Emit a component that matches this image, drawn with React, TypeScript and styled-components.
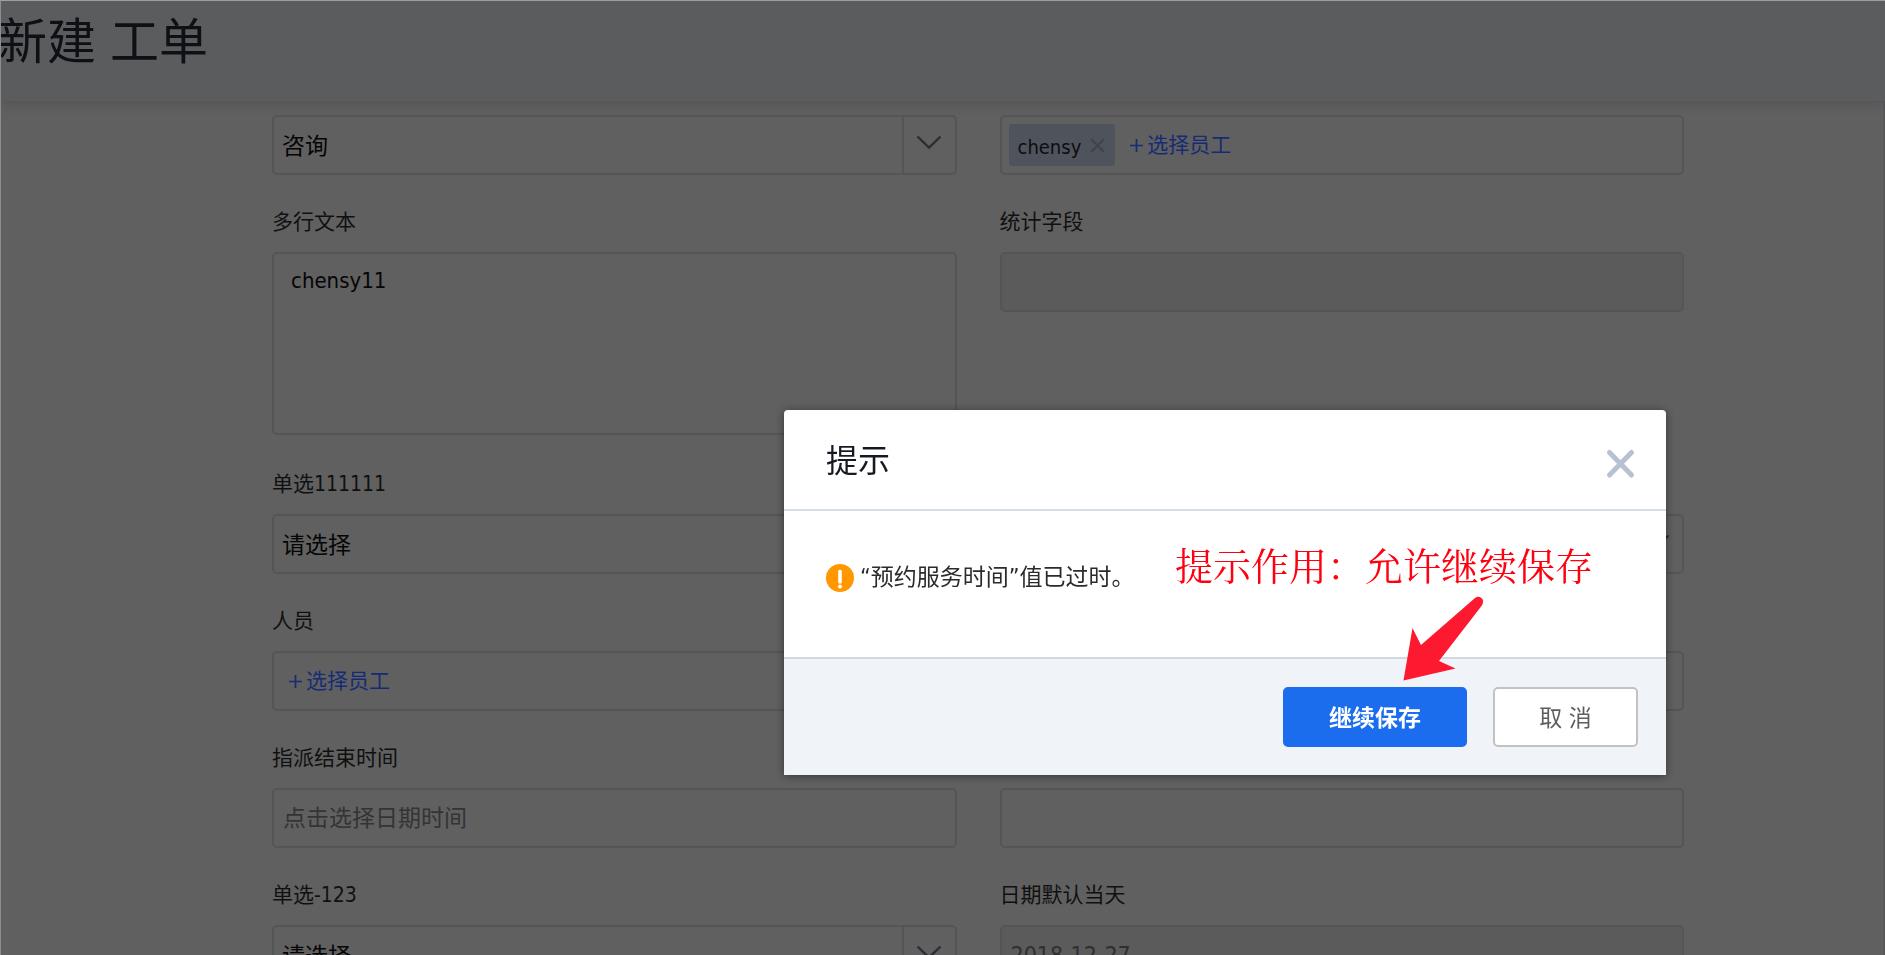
import React from 'react';
import styled, { createGlobalStyle } from 'styled-components';

const Global = createGlobalStyle`
  * { box-sizing: border-box; }
  body {
    margin: 0;
    background: #606060;
    font-family: "DejaVu Sans Condensed", "Noto Sans CJK SC", sans-serif;
  }
  input, select, textarea, button { font-family: inherit; margin: 0; }
`;

const Page = styled.div`
  height: 100vh;
  overflow: hidden;
  border-top: 1px solid #9d9fa0;
  border-left: 1px solid #8c8d8e;
`;

const Header = styled.header`
  position: relative;
  height: 100px;
  background: #5b5c5e;
  box-shadow: 0 2px 12px rgba(0, 0, 0, 0.16);
`;

const PageTitle = styled.h1`
  margin: 0 0 0 -3px;
  padding-top: 6px;
  font-size: 49px;
  line-height: 72px;
  font-weight: 400;
  color: #0d1015;
`;

const Form = styled.form`
  display: grid;
  grid-template-columns: 1fr 1fr;
  column-gap: 43px;
  row-gap: 32px;
  padding: 14px 199px 0 271px;
  border-right: 2px solid #56585a;
`;

const Field = styled.div`
  display: flex;
  flex-direction: column;
`;

const Label = styled.label`
  height: 30px;
  margin-bottom: 15px;
  font-size: 21px;
  line-height: 30px;
  color: #101010;
`;

const Box = styled.div<{ $muted?: boolean }>`
  display: flex;
  align-items: center;
  height: 60px;
  border: 2px solid #555;
  border-radius: 5px;
  background: ${(p) => (p.$muted ? '#5b5b5b' : '#606060')};
`;

const TextInput = styled.input`
  flex: 1;
  min-width: 0;
  height: 100%;
  padding: 0 9px;
  border: 0;
  outline: 0;
  background: transparent;
  font-size: 23px;
  color: #2f2f2f;
  &::placeholder { color: #343434; opacity: 1; }
`;

const TextArea = styled.textarea`
  display: block;
  height: 183px;
  margin-bottom: 2px;
  padding: 11px 17px;
  border: 2px solid #555;
  border-radius: 5px;
  outline: 0;
  resize: none;
  background: #606060;
  font-size: 22px;
  line-height: 32px;
  color: #050505;
`;

const Select = styled.select`
  flex: 1;
  height: 100%;
  padding: 2px 8px 0;
  border: 0;
  outline: 0;
  appearance: none;
  background: transparent;
  font-size: 23px;
  color: #050505;
  opacity: 1;
`;

const Caret = styled.span`
  display: flex;
  align-items: center;
  justify-content: center;
  width: 53px;
  height: 100%;
  padding-bottom: 4px;
  border-left: 2px solid #555;
`;

const Tag = styled.span`
  display: flex;
  align-items: center;
  gap: 9px;
  height: 42px;
  margin-left: 7px;
  padding: 4px 10px 0 9px;
  border-radius: 3px;
  background: #4f535b;
  font-size: 20px;
  color: #0c0e12;
`;

const TagRemove = styled.button`
  display: flex;
  padding: 0 0 4px;
  border: 0;
  background: none;
`;

const AddLink = styled.a`
  display: flex;
  align-items: center;
  gap: 4px;
  margin-left: 15px;
  font-size: 21px;
  line-height: 30px;
  color: #152c74;
  text-decoration: none;
`;

const Overlay = styled.div`
  position: fixed;
  inset: 0;
  display: flex;
  justify-content: flex-end;
  align-items: flex-start;
  padding: 410px 219px 0 0;
`;

const Dialog = styled.section`
  position: relative;
  width: 882px;
  border-radius: 4px 4px 0 0;
  background: #fff;
  box-shadow: 0 1px 8px rgba(0, 0, 0, 0.45);
`;

const DialogHeader = styled.div`
  display: flex;
  align-items: center;
  justify-content: space-between;
  height: 101px;
  padding: 0 30px 0 42px;
  border-bottom: 2px solid #d6dde7;
`;

const DialogTitle = styled.h2`
  margin: 0;
  padding-top: 2px;
  font-size: 32px;
  line-height: 46px;
  font-weight: 400;
  color: #151922;
`;

const CloseButton = styled.button`
  display: flex;
  padding: 8px 0 0;
  border: 0;
  background: none;
`;

const DialogBody = styled.div`
  display: flex;
  align-items: flex-start;
  gap: 6px;
  height: 146px;
  padding: 49px 42px 0;
`;

const Message = styled.p`
  margin: 0;
  font-size: 23px;
  line-height: 34px;
  color: #2b2b2b;
`;

const WarnIcon = styled.svg`
  margin-top: 4px;
`;

const DialogFooter = styled.div`
  display: flex;
  justify-content: flex-end;
  gap: 26px;
  height: 118px;
  padding: 28px 28px 0;
  border-top: 2px solid #d0d8e0;
  background: #f0f3f8;
`;

const Button = styled.button<{ $primary?: boolean }>`
  width: ${(p) => (p.$primary ? '184px' : '145px')};
  height: 60px;
  padding: 0 0 2px;
  border: 2px solid ${(p) => (p.$primary ? '#1b6dee' : '#c2c2c2')};
  border-radius: 5px;
  background: ${(p) => (p.$primary ? '#1b6dee' : '#fff')};
  font-size: 23px;
  font-weight: ${(p) => (p.$primary ? 700 : 400)};
  color: ${(p) => (p.$primary ? '#fff' : '#5e5e5e')};
`;

const Note = styled.span`
  position: absolute;
  top: 128px;
  left: 391px;
  font-family: "Noto Serif CJK SC", "Noto Sans CJK SC", serif;
  font-size: 38px;
  font-weight: 400;
  line-height: 52px;
  white-space: nowrap;
  color: #fe0010;
`;

const Arrow = styled.svg`
  position: absolute;
  top: 186px;
  left: 618px;
`;

const Chevron = () => (
  <Caret>
    <svg width="26" height="16" viewBox="0 0 26 16" fill="none" stroke="#2b2d33" strokeWidth="2.4">
      <path d="M1.500 1.500L13 12.500L24.500 1.500" />
    </svg>
  </Caret>
);

const AddStaff = () => (
  <AddLink href="#">
    <svg width="13" height="13" viewBox="0 0 13 13" stroke="#152c74" strokeWidth="1.700">
      <path d="M6.500 0V13M0 6.500H13" />
    </svg>
    选择员工
  </AddLink>
);

function SelectBox({ id, value, label }: { id: string; value: string; label?: string }) {
  return (
    <Box>
      <Select id={id} aria-label={label}>
        <option>{value}</option>
      </Select>
      <Chevron />
    </Box>
  );
}

export default function App() {
  return (
    <Page>
      <Global />
      <Header>
        <PageTitle>新建 工单</PageTitle>
      </Header>
      <Form>
        <SelectBox id="kind" value="咨询" label="类型" />
        <Box>
          <Tag>
            chensy
            <TagRemove type="button" aria-label="移除">
              <svg width="15" height="15" viewBox="0 0 15 15" stroke="#3f444c" strokeWidth="2">
                <path d="M1 1L14 14M14 1L1 14" />
              </svg>
            </TagRemove>
          </Tag>
          <AddStaff />
        </Box>

        <Field>
          <Label htmlFor="multi">多行文本</Label>
          <TextArea id="multi" defaultValue="chensy11" />
        </Field>
        <Field>
          <Label htmlFor="stat">统计字段</Label>
          <Box $muted>
            <TextInput id="stat" disabled />
          </Box>
        </Field>

        <Field>
          <Label htmlFor="single1">单选111111</Label>
          <SelectBox id="single1" value="请选择" />
        </Field>
        <Field>
          <Label htmlFor="single2" />
          <SelectBox id="single2" value="请选择" label="单选" />
        </Field>

        <Field>
          <Label as="span">人员</Label>
          <Box>
            <AddStaff />
          </Box>
        </Field>
        <Field>
          <Label htmlFor="text1" />
          <Box>
            <TextInput id="text1" aria-label="文本" />
          </Box>
        </Field>

        <Field>
          <Label htmlFor="end">指派结束时间</Label>
          <Box>
            <TextInput id="end" placeholder="点击选择日期时间" />
          </Box>
        </Field>
        <Field>
          <Label htmlFor="text2" />
          <Box>
            <TextInput id="text2" aria-label="文本" />
          </Box>
        </Field>

        <Field>
          <Label htmlFor="single3">单选-123</Label>
          <SelectBox id="single3" value="请选择" />
        </Field>
        <Field>
          <Label htmlFor="today">日期默认当天</Label>
          <Box $muted>
            <TextInput id="today" defaultValue="2018-12-27" readOnly />
          </Box>
        </Field>
      </Form>

      <Overlay>
        <Dialog role="dialog" aria-labelledby="dialog-title">
          <DialogHeader>
            <DialogTitle id="dialog-title">提示</DialogTitle>
            <CloseButton type="button" aria-label="关闭">
              <svg width="31" height="31" viewBox="0 0 31 31" stroke="#b7c1d1" strokeWidth="5" strokeLinecap="round">
                <path d="M4.500 4.500L26.500 27M26.500 4.500L4.500 27" />
              </svg>
            </CloseButton>
          </DialogHeader>
          <DialogBody>
            <WarnIcon width="28" height="28" viewBox="0 0 28 28">
              <circle cx="14" cy="14" r="14" fill="#ff9800" />
              <path d="M14 7.500V18" stroke="#fff" strokeWidth="3.600" strokeLinecap="round" />
              <circle cx="14" cy="22.600" r="2" fill="#fff" />
            </WarnIcon>
            <Message>“预约服务时间”值已过时。</Message>
          </DialogBody>
          <DialogFooter>
            <Button type="button" $primary>继续保存</Button>
            <Button type="button">取 消</Button>
          </DialogFooter>
          <Note>提示作用：允许继续保存</Note>
          <Arrow width="84" height="88" viewBox="0 0 84 88">
            <path
              d="M1.500 84.500L10.500 32L19 49L73 2Q77 -0.500 80 2.500Q82.500 5.500 79.500 10L37 65L53.500 72.500Z"
              fill="#fd192f"
            />
          </Arrow>
        </Dialog>
      </Overlay>
    </Page>
  );
}
